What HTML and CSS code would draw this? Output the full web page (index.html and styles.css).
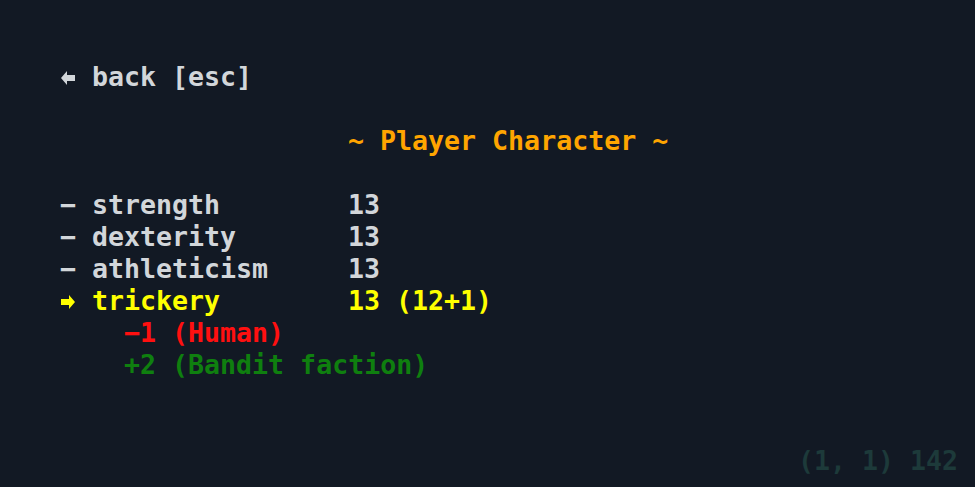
FILE: index.html
```html
<!DOCTYPE html>
<html>
<head>
<meta charset="utf-8">
<link rel="stylesheet" href="styles.css">
</head>
<body>
<div class="screen">
  <div class="line c-grey"><span class="mark"><svg class="arrow" viewBox="0 0 14 14" width="14" height="14"><polygon points="0,7 6,0 6,4 14,4 14,10 6,10 6,14" fill="currentColor"/></svg></span><span class="t">back [esc]</span></div>
  <div class="line"></div>
  <div class="line c-orange indent"><span class="t">~ Player Character ~</span></div>
  <div class="line"></div>
  <div class="row c-grey"><span class="mark">−</span><span class="name">strength</span><span>13</span></div>
  <div class="row c-grey"><span class="mark">−</span><span class="name">dexterity</span><span>13</span></div>
  <div class="row c-grey"><span class="mark">−</span><span class="name">athleticism</span><span>13</span></div>
  <div class="row c-yellow"><span class="mark"><svg class="arrow" viewBox="0 0 14 14" width="14" height="14"><polygon points="14,7 8,0 8,4 0,4 0,10 8,10 8,14" fill="currentColor"/></svg></span><span class="name">trickery</span><span class="t">13 (12+1)</span></div>
  <div class="line c-red sub"><span class="t">−1 (Human)</span></div>
  <div class="line c-green sub"><span class="t">+2 (Bandit faction)</span></div>
  <div class="line"></div>
  <div class="line"></div>
  <div class="line c-dim status"><span class="t">(1, 1) 142</span></div>
</div>
</body>
</html>
```
FILE: styles.css
```css
html, body {
  margin: 0;
  padding: 0;
  background: #121924;
  height: 100%;
}
.screen {
  padding: 61px 17px 0 60px;
  font-family: "DejaVu Sans Mono", "Liberation Mono", monospace;
  font-weight: bold;
  font-size: 26.6px;
  line-height: 32px;
}
.t { white-space: pre; }
.line {
  height: 32px;
  display: flex;
  align-items: center;
}
.row {
  height: 32px;
  display: grid;
  grid-template-columns: 32px 256px auto;
  align-items: center;
}
.mark {
  display: inline-flex;
  align-items: center;
  width: 32px;
  height: 32px;
}
.arrow {
  display: block;
  margin-left: 1px;
  margin-top: 2px;
}
.indent { padding-left: 288px; }
.sub { padding-left: 64px; }
.status { justify-content: flex-end; }
.c-grey { color: #d2d6da; }
.c-orange { color: #ffa500; }
.c-yellow { color: #ffff00; }
.c-red { color: #ff1010; }
.c-green { color: #0f7f0f; }
.c-dim { color: #1d3a3a; }
```
